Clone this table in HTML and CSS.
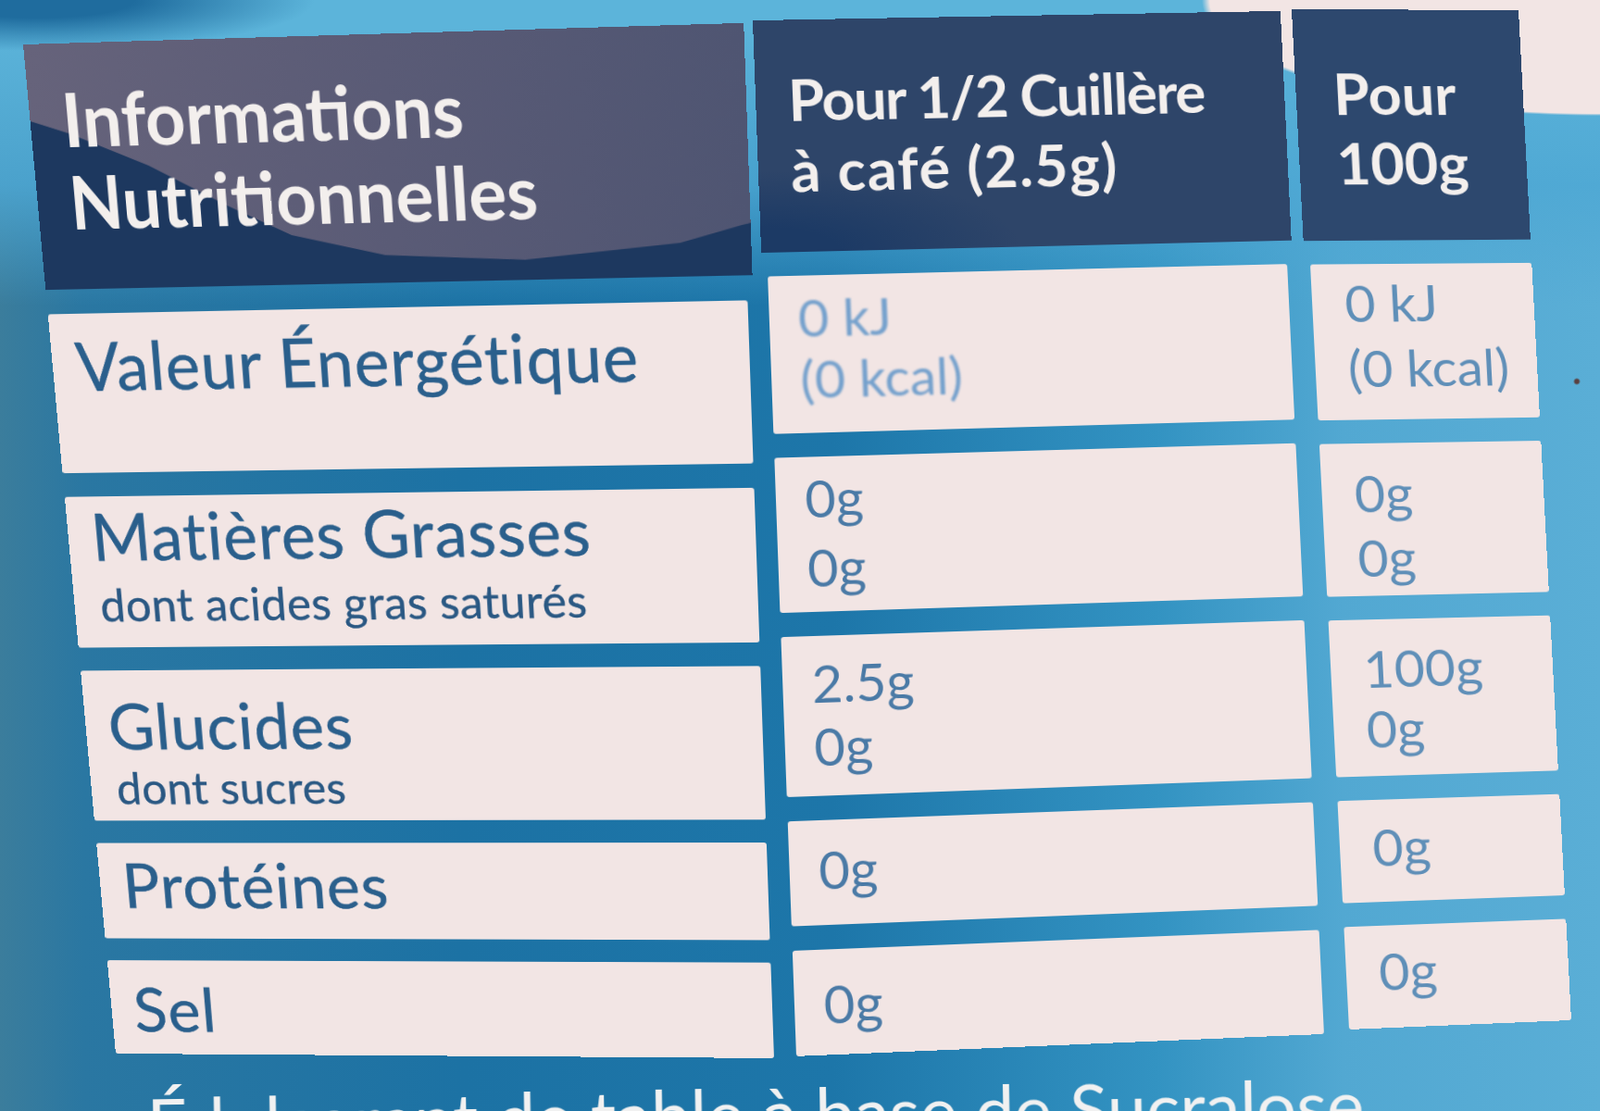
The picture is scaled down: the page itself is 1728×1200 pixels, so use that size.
FILE: index.html
```html
<!DOCTYPE html>
<html lang="fr">
<head>
<meta charset="utf-8">
<title>Informations Nutritionnelles</title>
<link rel="stylesheet" href="styles.css">
</head>
<body>
<main class="label">
  <div class="table">
    <section class="col col-name" data-quad="25,48,797,25,836,1143,125,1138">
      <div class="head head-name">
        <span class="ln">Informations</span>
        <span class="ln">Nutritionnelles</span>
      </div>
      <div class="cell r1"><span class="ln main">Valeur Énergétique</span></div>
      <div class="cell r2"><span class="ln main">Matières Grasses</span><span class="ln sub">dont acides gras saturés</span></div>
      <div class="cell r3"><span class="ln main">Glucides</span><span class="ln sub">dont sucres</span></div>
      <div class="cell r4"><span class="ln main">Protéines</span></div>
      <div class="cell r5"><span class="ln main">Sel</span></div>
    </section>
    <section class="col col-serv" data-quad="819,22,1377,12,1430,1117,860,1141">
      <div class="head head-serv">
        <span class="ln">Pour 1/2 Cuillère</span>
        <span class="ln wide">à café (2.5g)</span>
      </div>
      <div class="cell r1 faded"><span class="ln">0 kJ</span><span class="ln">(0 kcal)</span></div>
      <div class="cell r2"><span class="ln">0g</span><span class="ln">0g</span></div>
      <div class="cell r3"><span class="ln">2.5g</span><span class="ln">0g</span></div>
      <div class="cell r4"><span class="ln">0g</span></div>
      <div class="cell r5"><span class="ln">0g</span></div>
    </section>
    <section class="col col-100" data-quad="1401,10,1640,11,1697,1102,1457,1112">
      <div class="head head-100">
        <span class="ln">Pour</span>
        <span class="ln">100g</span>
      </div>
      <div class="cell r1"><span class="ln">0 kJ</span><span class="ln">(0 kcal)</span></div>
      <div class="cell r2"><span class="ln">0g</span><span class="ln">0g</span></div>
      <div class="cell r3"><span class="ln">100g</span><span class="ln">0g</span></div>
      <div class="cell r4"><span class="ln">0g</span></div>
      <div class="cell r5"><span class="ln">0g</span></div>
    </section>
  </div>
  <p class="footnote">Édulcorant de table à base de Sucralose.</p>
</main>
<script src="script.js"></script>
</body>
</html>
```

FILE: styles.css
```css
html {
  background: #2a7fae;
}

body {
  margin: 0;
  width: 1728px;
  height: 1200px;
  overflow: hidden;
  font-family: Lato, "Noto Sans", sans-serif;
  background:
    radial-gradient(circle 4px at 1703px 412px, #5a4040 50%, rgba(90, 64, 64, 0) 100%),
    radial-gradient(ellipse 430px 125px at 100% 0, #f2e5e4 98%, rgba(242, 229, 228, 0) 100%),
    radial-gradient(ellipse 300px 55px at 40px 0, #1f6c9e 35%, rgba(31, 108, 158, 0) 100%),
    linear-gradient(to bottom, #5cb4da 0, #5cb4da 30px, rgba(78, 168, 212, 0.85) 200px, rgba(60, 150, 200, 0) 330px),
    linear-gradient(to right, #3b7d9c 0, #2a77a2 90px, #1c72a4 500px, #1d76a9 900px, #3393c2 1250px, #52a8d2 1450px, #5aaed6 1728px);
}

.label {
  width: 1728px;
  height: 1200px;
}

.table {
  display: flex;
  align-items: flex-start;
  gap: 22px;
  width: 1608px;
  filter: blur(0.6px);
}

.col {
  flex: none;
  display: flex;
  flex-direction: column;
  gap: 26px;
  height: 1122px;
  box-sizing: border-box;
  transform-origin: 0 0;
}

.col-name { width: 760px; }
.col-serv { width: 564px; }
.col-100 { width: 240px; }

.ln {
  display: block;
  position: relative;
  white-space: nowrap;
}

/* header row */
.head {
  flex: none;
  position: relative;
  height: 256px;
  box-sizing: border-box;
  color: #f3efed;
  font-weight: 700;
}

.head-name {
  margin-right: -6px;
  padding: 35px 0 0 35px;
  font-size: 76px;
  line-height: 86px;
  background: linear-gradient(90deg, #66637b 0, #5a5b76 50%, #4f5572 100%);
}

.head-name::before {
  content: "";
  position: absolute;
  inset: 0;
  background: #1d385f;
  clip-path: polygon(0 79px, 42px 93px, 125px 128px, 208px 172px, 275px 204px, 375px 227px, 525px 235px, 691px 221px, 757px 204px, 100% 202px, 100% 100%, 0 100%);
}

.head-serv {
  margin: 0 -6px;
  padding: 49px 0 0 35px;
  font-size: 63px;
  line-height: 78px;
  letter-spacing: -1.5px;
  background:
    radial-gradient(ellipse 280px 90px at 0 100%, #1c3a65 30%, rgba(28, 58, 101, 0) 100%),
    #2e4569;
}

.head-serv .wide {
  letter-spacing: 1.5px;
}

.head-100 {
  margin-left: -6px;
  padding: 54px 0 0 40px;
  font-size: 63px;
  line-height: 77px;
  background: #2d486e;
}

/* body cells */
.cell {
  flex: none;
  box-sizing: border-box;
  background: #f2e5e4;
  border-radius: 3px;
}

.r1 { height: 172px; }
.r2 { height: 168px; }
.r3 { height: 172px; }
.r4 { height: 112px; }
.r5 { height: 112px; }

/* nutrient names */
.col-name .cell {
  padding-left: 26px;
  color: #2a5f8c;
}

.col-name .main {
  font-size: 72px;
  line-height: 80px;
  letter-spacing: 1px;
  -webkit-text-stroke: 0.5px currentColor;
}

.col-name .sub {
  margin-left: 3px;
  font-size: 51px;
  letter-spacing: 0.4px;
  color: #2a5883;
  -webkit-text-stroke: 0.4px currentColor;
}

.col-name .r1 { padding-top: 15px; }
.col-name .r2 { padding-top: 3px; }
.col-name .r2 .sub { line-height: 74px; }
.col-name .r3 { padding-top: 22px; }
.col-name .r3 .sub { line-height: 64px; }
.col-name .r4 { padding-top: 8px; }
.col-name .r5 { padding-top: 17px; }

/* per serving */
.col-serv .cell {
  padding-left: 31px;
  font-size: 57px;
  color: #4a7aa6;
}

.col-serv .r1 { padding-top: 12px; line-height: 67px; }
.col-serv .r2 { padding-top: 7px; line-height: 75px; }
.col-serv .r3 { padding-top: 16px; line-height: 68px; }
.col-serv .r4 { padding-top: 16px; line-height: 73px; }
.col-serv .r5 { padding-top: 21px; line-height: 73px; }

.col-serv .faded {
  color: #74a0cc;
}

.col-serv .faded .ln {
  filter: blur(1.2px);
}

/* per 100 g */
.col-100 .cell {
  padding-left: 35px;
  font-size: 57px;
  color: #5f8fb8;
}

.col-100 .r1 { padding-top: 6px; line-height: 72px; }
.col-100 .r2 { padding-top: 19px; line-height: 71px; }
.col-100 .r3 { padding-top: 20px; line-height: 66px; }
.col-100 .r4 { padding-top: 15px; line-height: 73px; }
.col-100 .r5 { padding-top: 13px; line-height: 73px; }

/* sweetener line under the table */
.footnote {
  margin: 55px 0 0;
  padding-left: 158px;
  font-size: 76px;
  line-height: 76px;
  color: #f1f1f1;
  white-space: nowrap;
  transform-origin: 0 0;
  transform: rotate(-0.9deg);
  filter: blur(0.6px);
}
```

FILE: script.js
```js
(function () {
  function quadMatrix(w, h, q) {
    var x0 = q[0], y0 = q[1], x1 = q[2], y1 = q[3];
    var x2 = q[4], y2 = q[5], x3 = q[6], y3 = q[7];
    var dx1 = x1 - x2, dx2 = x3 - x2, dx3 = x0 - x1 + x2 - x3;
    var dy1 = y1 - y2, dy2 = y3 - y2, dy3 = y0 - y1 + y2 - y3;
    var den = dx1 * dy2 - dx2 * dy1;
    var g = (dx3 * dy2 - dx2 * dy3) / den;
    var hh = (dx1 * dy3 - dx3 * dy1) / den;
    var a = x1 - x0 + g * x1, b = x3 - x0 + hh * x3, c = x0;
    var d = y1 - y0 + g * y1, e = y3 - y0 + hh * y3, f = y0;
    return [a / w, d / w, 0, g / w, b / h, e / h, 0, hh / h, 0, 0, 1, 0, c, f, 0, 1];
  }

  var cols = Array.prototype.slice.call(document.querySelectorAll('[data-quad]'));
  var rects = cols.map(function (el) { return el.getBoundingClientRect(); });

  cols.forEach(function (el, i) {
    var r = rects[i];
    var p = el.getAttribute('data-quad').split(',').map(Number);
    for (var k = 0; k < 8; k += 2) {
      p[k] -= r.left;
      p[k + 1] -= r.top;
    }
    var m = quadMatrix(el.offsetWidth, el.offsetHeight, p);
    el.style.transform = 'matrix3d(' + m.map(function (v) { return v.toFixed(9); }).join(',') + ')';
  });
})();
```
